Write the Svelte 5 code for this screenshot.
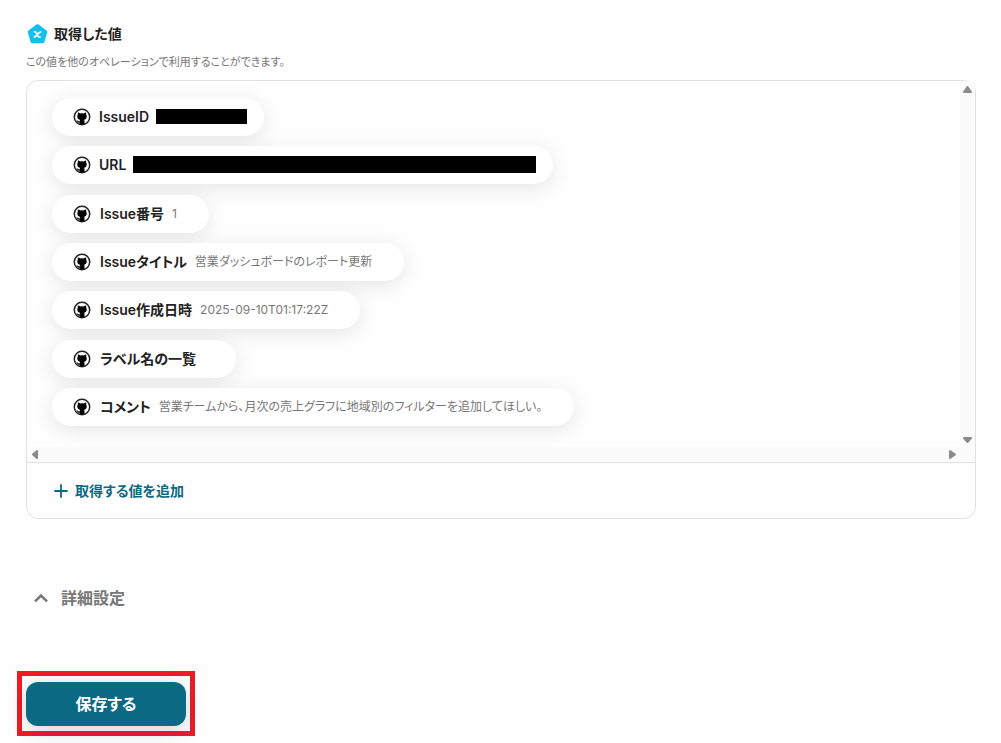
<script>
    let open = $state(true);

    // mask: width of the blacked out value in px
    const values = [
        { label: 'IssueID', value: '', mask: 91 },
        { label: 'URL', value: '', mask: 403, tall: true },
        { label: 'Issue番号', value: '1' },
        { label: 'Issueタイトル', value: '営業ダッシュボードのレポート更新' },
        { label: 'Issue作成日時', value: '2025-09-10T01:17:22Z' },
        { label: 'ラベル名の一覧', value: '' },
        { label: 'コメント', value: '営業チームから、月次の売上グラフに地域別のフィルターを追加してほしい。' }
    ];
</script>

<main>
    <header>
        <svg class="badge" viewBox="0 0 20 20" aria-hidden="true">
            <path d="M10 2.200 17.800 8 15 17.300H5L2.200 8Z" fill="#16bdee" stroke="#16bdee" stroke-width="4" stroke-linejoin="round" />
            <path d="M6.200 7.700h1.100c.9 0 1.300.4 1.700 1.200l1.300 2.900c.4.800.8 1.200 1.700 1.200h1.300M13.800 7.700c-1.300 0-2 .7-2.900 1.700l-1.800 2c-.9 1-1.600 1.600-2.900 1.600" fill="none" stroke="#fff" stroke-width="1.600" />
        </svg>
        <h2>取得した値</h2>
    </header>
    <p class="note">この値を他のオペレーションで利用することができます。</p>

    <section class="card">
        <div class="scroller">
            <ul class="values">
                {#each values as item}
                    <li class="pill" class:masked={item.mask}>
                        <svg class="github" viewBox="0 0 18 18" aria-hidden="true">
                            <circle cx="9" cy="9" r="7.700" fill="#fff" stroke="#222" stroke-width="1.500" />
                            <path d="M5 4.500c.9 0 1.600.4 2.200.9a9 9 0 0 1 3.600 0c.6-.5 1.300-.9 2.200-.9.300.8.300 1.500.1 2.100.4.500.6 1.100.6 1.900 0 2-1 3-2.700 3.300.3.400.5.900.5 1.600v3H6.700v-1.700c-1.900.3-2.300-1.200-3.200-1.900l.4-.5c1 .3 1.400 1.500 2.800 1.200 0-.7.100-1.300.4-1.700-1.800-.3-2.800-1.300-2.800-3.300 0-.8.2-1.400.6-1.900-.2-.6-.2-1.300.1-2.100z" fill="#000" />
                        </svg>
                        <span class="label">{item.label}</span>
                        {#if item.mask}
                            <span class="mask" class:tall={item.tall} style="width: {item.mask}px"></span>
                        {:else}
                            <span class="value">{item.value}</span>
                        {/if}
                    </li>
                {/each}
            </ul>
            <div class="track vertical">
                <svg class="arrow" viewBox="0 0 15 15"><path d="M7.500 6 11 11H4Z" /></svg>
                <svg class="arrow" viewBox="0 0 15 15"><path d="M7.500 10 11 6H4Z" /></svg>
            </div>
            <div class="track horizontal">
                <svg class="arrow" viewBox="0 0 15 15"><path d="M6 7.500 10 4V11Z" /></svg>
                <svg class="arrow" viewBox="0 0 15 15"><path d="M10 7.500 5 4V11Z" /></svg>
            </div>
            <div class="track"></div>
        </div>
        <div class="add-row">
            <button class="add">
                <svg viewBox="0 0 14 14" aria-hidden="true">
                    <path d="M7 1v12M1 7h12" fill="none" stroke="#0c6983" stroke-width="1.800" stroke-linecap="round" />
                </svg>
                取得する値を追加
            </button>
        </div>
    </section>

    <button class="detail" aria-expanded={open} onclick={() => (open = !open)}>
        <svg class:closed={!open} viewBox="0 0 16 16" aria-hidden="true">
            <path d="M2 11.300 8 5.500 14 11.300" fill="none" stroke="#777" stroke-width="2.500" />
        </svg>
        詳細設定
    </button>

    <div class="highlight">
        <button class="save">保存する</button>
    </div>
</main>

<style>
    :global(body) {
        margin: 0;
        background: #fefefe;
    }
    main {
        padding: 24px 25px 7px 26px;
        font-family: Inter, 'Noto Sans CJK JP', sans-serif;
        font-feature-settings: 'palt';
        color: #222;
    }
    button {
        border: 0;
        background: none;
        font: inherit;
        font-feature-settings: inherit;
        cursor: pointer;
    }
    header {
        display: flex;
        align-items: center;
        gap: 6px;
        padding-left: 1px;
        height: 20px;
    }
    .badge {
        width: 21px;
        height: 20px;
    }
    h2 {
        margin: 0;
        font-size: 14px;
        line-height: 20px;
        font-weight: 600;
    }
    .note {
        margin: 9px 0 8px;
        font-size: 11px;
        line-height: 19px;
        color: #777;
    }
    .card {
        border: 1px solid #e2e2e2;
        border-radius: 12px;
        background: #fefefe;
    }
    .scroller {
        display: grid;
        grid-template-columns: 1fr 15px;
        grid-template-rows: auto 15px;
        border-bottom: 1px solid #e2e2e2;
    }
    .values {
        display: flex;
        flex-direction: column;
        align-items: flex-start;
        justify-content: space-between;
        min-height: 328px;
        margin: 0;
        padding: 17px 25px 21px;
        list-style: none;
        overflow: hidden;
        border-top-left-radius: 12px;
    }
    .pill {
        display: flex;
        align-items: center;
        gap: 8px;
        box-sizing: border-box;
        height: 38px;
        padding: 0 32px 0 21px;
        border-radius: 19px;
        background: #fff;
        box-shadow: 0 4px 20px rgba(0, 0, 0, 0.1);
        white-space: nowrap;
    }
    .masked {
        gap: 7px;
        padding-right: 17px;
    }
    .github {
        flex: none;
        width: 18px;
        height: 18px;
        margin-right: 1px;
    }
    .label {
        font-size: 14px;
        line-height: 20px;
        font-weight: 600;
    }
    .value {
        font-size: 12px;
        line-height: 20px;
        color: #777;
    }
    .mask {
        height: 15px;
        margin-bottom: 2px;
        background: #000;
    }
    .tall {
        height: 17px;
    }
    .track {
        display: flex;
        justify-content: space-between;
        background: #fbfbfb;
    }
    .vertical {
        flex-direction: column;
    }
    .arrow {
        width: 15px;
        height: 15px;
        fill: #8b8b8b;
        stroke: #8b8b8b;
        stroke-width: 2;
        stroke-linejoin: round;
    }
    .add-row {
        display: flex;
        align-items: center;
        height: 55px;
        padding: 0 27px;
    }
    .add {
        display: flex;
        align-items: center;
        gap: 7px;
        padding: 0;
        font-size: 14px;
        line-height: 20px;
        font-weight: 600;
        color: #0c6983;
    }
    .add svg {
        width: 14px;
        height: 14px;
    }
    .detail {
        display: flex;
        align-items: center;
        gap: 12px;
        margin: 67px 0 61px;
        padding: 0 7px;
        font-size: 16px;
        line-height: 24px;
        font-weight: 600;
        color: #777;
    }
    .detail svg {
        width: 16px;
        height: 16px;
    }
    .closed {
        transform: rotate(180deg);
    }
    .highlight {
        width: fit-content;
        margin-left: -9px;
        padding: 6px 4px 5px;
        border: 5px solid #ee1c25;
    }
    .save {
        display: block;
        width: 160px;
        height: 44px;
        padding: 0;
        border-radius: 12px;
        background: #0c6983;
        box-shadow: 0 4px 20px rgba(0, 40, 60, 0.2);
        font-size: 16px;
        line-height: 24px;
        font-weight: 700;
        color: #fff;
    }
</style>
